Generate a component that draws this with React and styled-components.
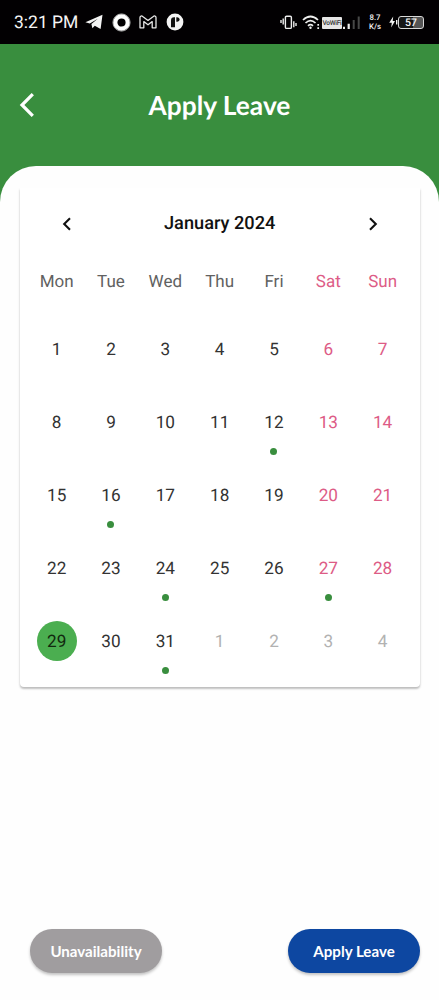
import React from 'react';
import styled, { createGlobalStyle } from 'styled-components';

const GlobalStyle = createGlobalStyle`
  * {
    box-sizing: border-box;
  }

  body {
    margin: 0;
    background: #fefefe;
  }

  button {
    border: none;
    padding: 0;
    background: none;
    font: inherit;
    cursor: pointer;
  }
`;

const Screen = styled.div`
  display: flex;
  flex-direction: column;
  height: 1000px;
  background: #398e3e;
  font-family: Roboto, sans-serif;
  text-rendering: geometricPrecision;
  overflow: hidden;
`;

const StatusBar = styled.div`
  display: flex;
  align-items: center;
  justify-content: space-between;
  height: 44px;
  padding: 0 15px 0 14px;
  background: #020002;
  color: #f4f4f4;
`;

const StatusGroup = styled.div`
  display: flex;
  align-items: center;
  height: 44px;

  svg {
    display: block;
    flex: none;
  }
`;

const Time = styled.span`
  width: 71px;
  font-size: 17.5px;
  line-height: 20px;
  white-space: nowrap;
  padding-top: 2px;
`;

const VoWifi = styled.span`
  width: 20px;
  height: 12px;
  margin: 1px 1px 0 1px;
  border-radius: 1px;
  background: #e6e6e6;
  color: #333;
  font-size: 6.6px;
  font-weight: 500;
  line-height: 12px;
  text-align: center;
  letter-spacing: -0.3px;
`;

const Speed = styled.span`
  width: 14px;
  margin: 0 7px 0 7px;
  font-size: 7.8px;
  font-weight: 500;
  line-height: 9px;
  text-align: center;
`;

const Battery = styled.span`
  width: 26px;
  height: 13px;
  border: 1px solid #d8d8d8;
  border-radius: 3px;
  background: linear-gradient(to right, #161616 58%, #555 58%);
  font-size: 10.5px;
  font-weight: 500;
  line-height: 11px;
  text-align: center;
`;

const Header = styled.header`
  display: grid;
  grid-template-columns: 54px 1fr 54px;
  align-items: center;
  height: 122px;
`;

const BackButton = styled.button`
  display: flex;
  align-items: center;
  height: 40px;
  padding-left: 19px;
`;

const Title = styled.h1`
  margin: 0;
  color: #fff;
  font-family: Lato, sans-serif;
  font-size: 26.3px;
  font-weight: 700;
  line-height: 32px;
  text-align: center;
`;

const Sheet = styled.main`
  display: flex;
  flex: 1;
  flex-direction: column;
  justify-content: space-between;
  padding: 22px 19px 27px 20px;
  border-radius: 36px 36px 0 0;
  background: #fefefe;
`;

const Card = styled.section`
  height: 499px;
  padding: 0 10.2px 0 9.5px;
  border-radius: 0 0 4px 4px;
  background: #fff;
  box-shadow: 0 2px 2px rgba(0, 0, 0, 0.2), 0 1px 3px rgba(0, 0, 0, 0.1);
  clip-path: inset(0 -6px -8px -6px);
`;

const MonthBar = styled.div`
  display: flex;
  align-items: center;
  justify-content: space-between;
  height: 71px;
  padding: 0 27px;
`;

const MonthName = styled.h2`
  margin: 0;
  color: #111;
  font-size: 18.2px;
  font-weight: 500;
  line-height: 24px;
`;

const MonthButton = styled.button`
  display: flex;
  width: 20px;
  height: 24px;
  align-items: center;
  justify-content: center;
`;

const Grid = styled.div`
  display: grid;
  grid-template-columns: repeat(7, 1fr);
`;

const Weekday = styled.div`
  height: 53px;
  padding-top: 11px;
  color: ${({ $weekend }) => ($weekend ? '#dd5c86' : '#616161')};
  font-size: 17px;
  line-height: 24px;
  text-align: center;
`;

const dayColor = ({ $outside, $weekend, $selected }) => {
  if ($outside) return '#b2b2b2';
  if ($weekend) return '#dd5c86';
  return $selected ? '#12290f' : '#333';
};

const Day = styled.div`
  display: flex;
  flex-direction: column;
  align-items: center;
  height: 73.1px;
  padding-top: 16.5px;
  color: ${dayColor};
  font-size: 17.2px;
`;

const DayNumber = styled.span`
  width: 40px;
  height: 40px;
  border-radius: 50%;
  background: ${({ $selected }) => ($selected ? '#4bae50' : 'transparent')};
  line-height: 42px;
  text-align: center;
`;

const Dot = styled.span`
  width: 7px;
  height: 7px;
  margin-top: 6px;
  border-radius: 50%;
  background: #398e3e;
`;

const Actions = styled.div`
  display: flex;
  justify-content: space-between;
  padding-left: 10px;
`;

const ActionButton = styled.button`
  && {
    width: 132px;
    height: 44px;
    border-radius: 22px;
    background: ${({ $primary }) => ($primary ? '#0d47a1' : '#a09d9f')};
    color: #fff;
    font-family: Lato, sans-serif;
    font-size: 15.1px;
    font-weight: 700;
    box-shadow: 0 2px 3px rgba(0, 0, 0, 0.24);
  }
`;

const TelegramIcon = () => (
  <svg width="18" height="16" viewBox="0 0 18 16" fill="#f4f4f4">
    <path d="M.4 8.2 17.5.8 15.6 15 9.8 11.8 7.4 14.2 6.4 10 12.8 4.8 4.8 9.4Z" />
  </svg>
);

const RingIcon = () => (
  <svg width="19" height="19" viewBox="0 0 19 19" fill="none">
    <circle cx="9.5" cy="9.5" r="8.6" stroke="#aaa" />
    <circle cx="9.5" cy="9.5" r="6.2" stroke="#fff" strokeWidth="4.2" />
  </svg>
);

const MailIcon = () => (
  <svg width="18" height="14" viewBox="0 0 18 14" fill="none" stroke="#e8e8e8" strokeWidth="1.3" strokeLinejoin="round">
    <path d="M1 12.8V2.4C1 .9 2.7.6 3.7 1.4L9 5.4l5.3-4c1-.8 2.7-.5 2.7 1v10.4h-3.8V6.6L9 9.8 4.8 6.6v6.2Z" />
  </svg>
);

const BadgeIcon = () => (
  <svg width="18" height="18" viewBox="0 0 18 18">
    <circle cx="9" cy="9" r="8.4" fill="#f4f4f4" />
    <path d="M5 14.2V7.2Q5 4.2 8 4.2H9V14.2Z" fill="#111" />
    <path d="M10.3 4.2H11.4Q13.6 4.4 13.6 6.5T11.4 8.8H10.3Z" fill="#111" />
  </svg>
);

const VibrateIcon = () => (
  <svg width="17" height="15" viewBox="0 0 17 15" fill="none" stroke="#eee" strokeWidth="1.4">
    <rect x="5.4" y="1.2" width="6" height="12.2" rx="1.2" />
    <path d="M3.2 3.6v6M1 5v3M13.8 6.2v6M16 8v3" />
  </svg>
);

const WifiIcon = () => (
  <svg width="19" height="15" viewBox="0 0 19 15" fill="none" stroke="#eee" strokeWidth="1.7">
    <path d="M1 5Q8.5-2 16 5M3.5 8Q8.5 3.2 13.5 8M6 10.8Q8.5 8.6 11 10.8" />
    <circle cx="8.5" cy="12.8" r="1.2" fill="#eee" stroke="none" />
    <path d="M16.2 9v1.8M16.2 12.2V14" />
  </svg>
);

const SignalIcon = () => (
  <svg width="18" height="15" viewBox="0 0 18 15">
    <path d="M0 11.7h2V14H0zM4.6 8.7h2.2V14H4.6z" fill="#eee" />
    <path d="M9.7 5h2v9h-2zM14.7 1.5h2V14h-2z" fill="#484848" />
  </svg>
);

const BoltIcon = () => (
  <svg width="9" height="12" viewBox="0 0 9 12" fill="#f4f4f4">
    <path d="M4.2.5.2 6.7H2.8L2.2 11.5 6 4.9H3.7Z" />
    <path d="M7 4h1.4v4.4H7z" />
  </svg>
);

const Chevron = ({ right }) => (
  <svg width="10" height="14" viewBox="0 0 10 14" fill="none" stroke="#111" strokeWidth="2.1">
    <path d={right ? 'M2 1.2 7.8 7 2 12.8' : 'M8 1.2 2.2 7 8 12.8'} />
  </svg>
);

const weekdays = ['Mon', 'Tue', 'Wed', 'Thu', 'Fri', 'Sat', 'Sun'];
const marked = [12, 16, 24, 27, 31];
const selectedDay = 29;

// January starts on a Monday, the last row runs into February
const days = Array.from({ length: 35 }, (_, i) => ({
  number: i < 31 ? i + 1 : i - 30,
  outside: i >= 31,
  weekend: i % 7 > 4,
}));

const Calendar = () => (
  <Card>
    <MonthBar>
      <MonthButton aria-label="Previous month">
        <Chevron />
      </MonthButton>
      <MonthName>January 2024</MonthName>
      <MonthButton aria-label="Next month">
        <Chevron right />
      </MonthButton>
    </MonthBar>
    <Grid>
      {weekdays.map((name, i) => (
        <Weekday key={name} $weekend={i > 4}>
          {name}
        </Weekday>
      ))}
      {days.map(({ number, outside, weekend }, i) => {
        const selected = !outside && number === selectedDay;
        return (
          <Day key={i} $outside={outside} $weekend={weekend} $selected={selected}>
            <DayNumber $selected={selected}>{number}</DayNumber>
            {!outside && marked.includes(number) && <Dot />}
          </Day>
        );
      })}
    </Grid>
  </Card>
);

const AppIcons = styled(StatusGroup)`
  gap: 8.5px;
`;

const RadioIcons = styled(StatusGroup)`
  gap: 5px;
`;

const App = () => {
  return (
    <>
      <GlobalStyle />
      <Screen>
        <StatusBar>
          <StatusGroup>
            <Time>3:21 PM</Time>
            <AppIcons>
              <TelegramIcon />
              <RingIcon />
              <MailIcon />
              <BadgeIcon />
            </AppIcons>
          </StatusGroup>
          <StatusGroup>
            <RadioIcons>
              <VibrateIcon />
              <WifiIcon />
            </RadioIcons>
            <VoWifi>VoWiFi</VoWifi>
            <SignalIcon />
            <Speed>
              8.7
              <br />
              K/s
            </Speed>
            <BoltIcon />
            <Battery>57</Battery>
          </StatusGroup>
        </StatusBar>
        <Header>
          <BackButton aria-label="Back">
            <svg width="16" height="24" viewBox="0 0 16 24" fill="none" stroke="#fff" strokeWidth="3.2">
              <path d="M13.8 1.2 3 12 13.8 22.8" />
            </svg>
          </BackButton>
          <Title>Apply Leave</Title>
        </Header>
        <Sheet>
          <Calendar />
          <Actions>
            <ActionButton>Unavailability</ActionButton>
            <ActionButton $primary>Apply Leave</ActionButton>
          </Actions>
        </Sheet>
      </Screen>
    </>
  );
};

export default App;
